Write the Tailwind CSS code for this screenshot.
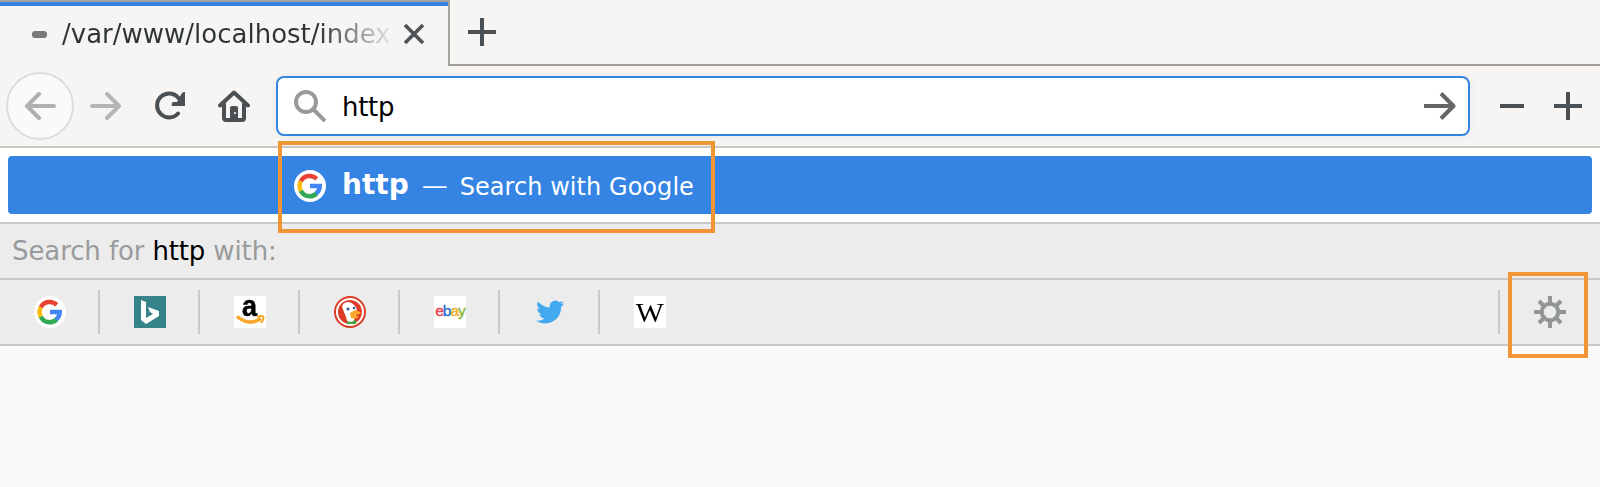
<!DOCTYPE html>
<html lang="en">
<head>
<meta charset="utf-8">
<title>Browser address bar search</title>
<script src="https://cdn.jsdelivr.net/npm/@tailwindcss/browser@4"></script>
</head>
<body class="relative h-[487px] w-[1600px] overflow-hidden bg-[#f9f9f9] font-['DejaVu_Sans',sans-serif] text-[26px] leading-[30px] text-black">

<!-- Tab strip -->
<header class="flex h-[66px] bg-[#f6f5f4]">
  <div class="flex w-[450px] items-start border-t-2 border-r-2 border-[#a2a29e]">
    <div class="flex h-16 w-full items-center border-t-4 border-[#3584e4] pl-8">
      <span class="mb-[4px] h-[7px] w-[15px] shrink-0 rounded-[3px] bg-[#777a7b]"></span>
      <span class="mb-[5px] ml-[15px] w-[330px] overflow-hidden whitespace-nowrap bg-linear-to-r from-[#2e3436] from-78% to-[#2e3436]/5 to-100% bg-clip-text text-transparent">/var/www/localhost/index</span>
      <svg class="mb-[4px] ml-[11px] shrink-0" width="22" height="22" viewBox="0 0 22 22" fill="none" stroke="#4d5356" stroke-width="3.600"><path d="M2 2 20 20M20 2 2 20"/></svg>
    </div>
  </div>
  <div class="flex-1 border-b-2 border-[#9d9a97] pt-[18px] pl-[18px]">
    <svg width="28" height="28" viewBox="0 0 28 28" stroke="#4a5053" stroke-width="4"><path d="M14 0v28M0 14h28"/></svg>
  </div>
</header>

<!-- Navigation toolbar -->
<nav class="flex h-[82px] items-start border-b-2 border-[#cdc7c2] bg-[#f6f5f4] text-[#4a5053]">
  <div class="mt-[6px] ml-[6px] flex h-[68px] w-[68px] items-center justify-center rounded-full border-2 border-[#dddcda] bg-[#fafaf9]">
    <svg width="32" height="28" viewBox="0 0 32 28" fill="none" stroke="#b0b1af" stroke-width="4" stroke-linecap="round" stroke-linejoin="round"><path d="M3 14h27M15 2 3 14l12 12"/></svg>
  </div>
  <svg class="mt-[26px] ml-4" width="32" height="28" viewBox="0 0 32 28" fill="none" stroke="#b5b6b4" stroke-width="4" stroke-linecap="round" stroke-linejoin="round"><path d="M2 14h27M17 2l12 12-12 12"/></svg>
  <svg class="mt-[25px] ml-[33px]" width="32" height="30" viewBox="0 0 32 30" fill="none" stroke="currentColor" stroke-width="4"><path d="M23 22.500A12 12 0 1 1 23.500 7" stroke-linecap="round"/><path d="M30 1v14H17q-1-3 1-4h4l5-9q1-1 3-1z" fill="currentColor" stroke="none"/></svg>
  <svg class="mt-[24px] ml-[31px]" width="32" height="32" viewBox="0 0 32 32" fill="none" stroke="currentColor" stroke-width="4" stroke-linecap="round" stroke-linejoin="round"><path d="M2 15.500 16 2.500 30 15.500M6 14v14q0 2 2 2h16q2 0 2-2V14"/><path d="M12 30V18q0-2 2-2h4q2 0 2 2v12z" fill="currentColor" stroke="none"/><path d="M16 22h2v2h-2z" fill="#d5d5d4" stroke="none"/></svg>
  <div class="mt-[10px] ml-[26px] flex h-[60px] w-[1194px] items-center rounded-lg border-2 border-[#3584e4] bg-white shadow-[0_1px_8px_rgba(0,0,0,0.06)]">
    <svg class="ml-4" width="32" height="32" viewBox="0 0 32 32" fill="none" stroke="#999" stroke-width="4"><circle cx="12" cy="12" r="10"/><path d="m19 19 12 12"/></svg>
    <span class="mt-[2px] ml-4 flex-1 tracking-[-0.3px] text-black">http</span>
    <svg class="mr-3" width="32" height="28" viewBox="0 0 32 28" fill="none" stroke="#666" stroke-width="4" stroke-linejoin="round"><path d="M0 14h29M17 1.500 29.500 14 17 26.500"/></svg>
  </div>
  <svg class="mt-[38px] ml-[30px]" width="24" height="4" viewBox="0 0 24 4" fill="currentColor"><path d="M0 0h24v4H0z"/></svg>
  <svg class="mt-[26px] ml-[30px]" width="28" height="28" viewBox="0 0 28 28" stroke="currentColor" stroke-width="4"><path d="M14 0v28M0 14h28"/></svg>
</nav>

<!-- Suggestion -->
<section class="h-[76px] border-b-2 border-[#c9c7c1] bg-white px-2 pt-2">
  <div class="flex h-[58px] items-center rounded-[4px] bg-[#3584e4] pl-[286px] text-white">
    <svg class="mt-[2px]" width="32" height="32" viewBox="0 0 32 32"><circle cx="16" cy="16" r="16" fill="#fff"/><g fill="none" stroke-width="4.500"><path d="M6.800 11.300A10 10 0 0 1 22.700 8.800" stroke="#ea4335"/><path d="M6.800 20.700a10 10 0 0 1 0-9.400" stroke="#fbbc05"/><path d="M22.600 23.500A10 10 0 0 1 6.800 20.700" stroke="#34a853"/><path d="M16 16h9.700a10 10 0 0 1-3.500 7.600" stroke="#4285f4"/></g></svg>
    <span class="ml-4 text-[28px] font-bold">http</span>
    <span class="mt-[1px] ml-[13px] inline-block origin-left scale-x-[1.08] text-2xl">—</span>
    <span class="mt-[4px] ml-[14px] text-2xl tracking-[0.050px] whitespace-nowrap">Search with Google</span>
  </div>
</section>

<!-- One-off search engines -->
<section class="h-14 border-b-2 border-[#c9c7c1] bg-[#ececec] pt-3 pl-3 tracking-[-0.1px] whitespace-nowrap text-[#999b9b]">Search for <span class="tracking-[-0.2px] text-black">http</span> with:</section>
<section class="flex h-[66px] items-start border-b-2 border-[#cdc7c2] bg-[#ececec] pt-[10px]">
  <div class="flex h-11 w-[100px] items-center justify-center border-r-2 border-[#cdc7c2]">
    <svg class="ml-[2px]" width="32" height="32" viewBox="0 0 32 32"><circle cx="16" cy="16" r="16" fill="#fff"/><g fill="none" stroke-width="4.500"><path d="M6.800 11.300A10 10 0 0 1 22.700 8.800" stroke="#ea4335"/><path d="M6.800 20.700a10 10 0 0 1 0-9.400" stroke="#fbbc05"/><path d="M22.600 23.500A10 10 0 0 1 6.800 20.700" stroke="#34a853"/><path d="M16 16h9.700a10 10 0 0 1-3.500 7.600" stroke="#4285f4"/></g></svg>
  </div>
  <div class="flex h-11 w-[100px] items-center justify-center border-r-2 border-[#cdc7c2]">
    <svg class="ml-[2px]" width="32" height="32" viewBox="0 0 32 32"><path d="M0 0h32v32H0z" fill="#37838a"/><path d="m7 4 5 2v16l7-4-3-2-2-5 11 4v5l-13 8-5-4z" fill="#fff"/></svg>
  </div>
  <div class="flex h-11 w-[100px] items-center justify-center border-r-2 border-[#cdc7c2]">
    <div class="relative ml-[2px] h-8 w-8 bg-white">
      <span class="absolute top-[-6px] left-[8px] font-['Liberation_Sans',sans-serif] text-[30px] leading-[32px] font-bold [-webkit-text-stroke:0.5px_black]"><span class="inline-block origin-left scale-x-90">a</span></span>
      <svg class="absolute inset-0" width="32" height="32" viewBox="0 0 32 32" fill="none" stroke="#f9a62b"><path d="M3 20.500q12 10 24 2" stroke-width="3.500"/><path d="M23 21q6-2 6.500 0t-2.500 6" stroke-width="2"/></svg>
    </div>
  </div>
  <div class="flex h-11 w-[100px] items-center justify-center border-r-2 border-[#cdc7c2]">
    <svg class="ml-[2px]" width="32" height="32" viewBox="0 0 32 32"><circle cx="16" cy="16" r="15" fill="#fff" stroke="#dc3b26" stroke-width="2"/><circle cx="16" cy="16" r="12" fill="#dc3b26"/><path d="M9 8q6-5 12 2 3 3 1 9l-4 10q-5-1-6-8L8 11z" fill="#fff"/><path d="m16 17 5-3q6 2 6 3-2 2-6 2l4 2q-4 3-8 1z" fill="#fba52c"/><path d="m13 25 4 1 5-2v4h-9z" fill="#45a545"/><circle cx="14" cy="13" r="1.500" fill="#345c9c"/><circle cx="20" cy="12" r="1.300" fill="#345c9c"/></svg>
  </div>
  <div class="flex h-11 w-[100px] items-center justify-center border-r-2 border-[#cdc7c2]">
    <div class="ml-[2px] flex h-8 w-8 justify-center bg-white font-['Liberation_Sans',sans-serif] text-[15.500px] leading-[30px] tracking-[-1px] [-webkit-text-stroke:0.4px]"><span class="text-[#e64553]">e</span><span class="text-[#276fca]">b</span><span class="text-[#f2ae2d]">a</span><span class="text-[#8bb936]">y</span></div>
  </div>
  <div class="flex h-11 w-[100px] items-center justify-center border-r-2 border-[#cdc7c2]">
    <svg class="ml-[2px]" width="32" height="32" viewBox="0 0 32 32"><path d="M30 7.200a12 12 0 0 1-3.300.9 5.800 5.800 0 0 0 2.500-3.200 11 11 0 0 1-3.600 1.400 5.800 5.800 0 0 0-9.800 5.200A16.300 16.300 0 0 1 4 5.600a5.800 5.800 0 0 0 1.800 7.600 5.600 5.600 0 0 1-2.600-.7c0 3 2 5.200 4.600 5.700a5.600 5.600 0 0 1-2.600.1 5.800 5.800 0 0 0 5.400 4A11.500 11.500 0 0 1 2 24.700C13 31.500 27.200 25 27.200 10.800A11 11 0 0 0 30 7.200z" fill="#42a9ef"/></svg>
  </div>
  <div class="flex h-11 w-[100px] items-center justify-center">
    <div class="flex h-8 w-8 justify-center overflow-hidden bg-white font-['Liberation_Serif',serif] text-[27px] leading-[34px]"><span class="inline-block scale-x-110">W</span></div>
  </div>
  <div class="ml-auto flex h-11 w-[102px] items-center justify-center border-l-2 border-[#cdc7c2]">
    <svg width="32" height="32" viewBox="0 0 32 32" fill="none" stroke="#929595" stroke-width="4"><circle cx="16" cy="16" r="8.300"/><path d="M16 0v8M16 24v8M0 16h8M24 16h8M5 5l5 5M22 22l5 5M27 5l-5 5M10 22l-5 5"/></svg>
  </div>
</section>

<!-- Highlight frames laid over the page -->
<div class="absolute top-[141px] left-[278px] h-[92px] w-[437px] border-4 border-[#f29536]"></div>
<div class="absolute top-[272px] left-[1508px] h-[86px] w-[80px] border-4 border-[#f29536]"></div>
</body>
</html>
